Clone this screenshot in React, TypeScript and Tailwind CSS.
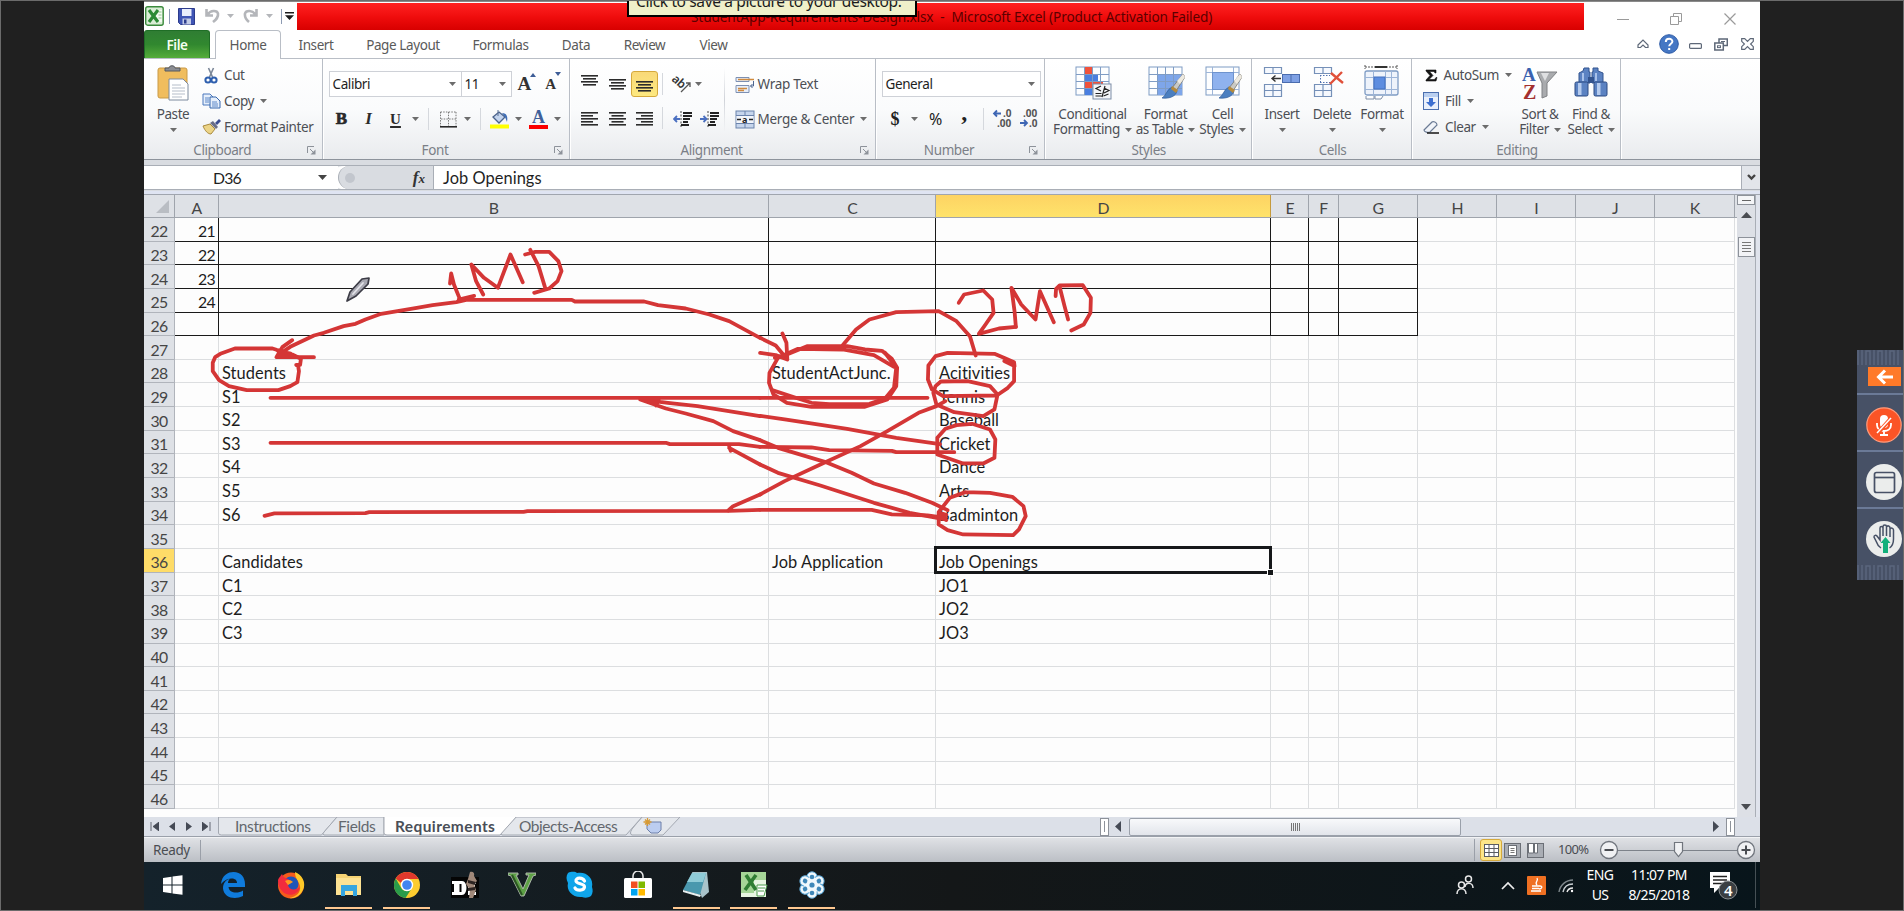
import React from "react";

const ROWS = Array.from({ length: 25 }, (_, i) => i + 22);

const COLS = [
  { id: "A", w: "w-[44px]" },
  { id: "B", w: "w-[550px]" },
  { id: "C", w: "w-[167px]" },
  { id: "D", w: "w-[335px]" },
  { id: "E", w: "w-[38px]" },
  { id: "F", w: "w-[29.5px]" },
  { id: "G", w: "w-[79.5px]" },
  { id: "H", w: "w-[79px]" },
  { id: "I", w: "w-[79px]" },
  { id: "J", w: "w-[79px]" },
  { id: "K", w: "w-[80px]" },
];

const CELLS: Record<string, string> = {
  A22: "21", A23: "22", A24: "23", A25: "24",
  B28: "Students", C28: "StudentActJunc.", D28: "Acitivities",
  B29: "S1", D29: "Tennis",
  B30: "S2", D30: "Baseball",
  B31: "S3", D31: "Cricket",
  B32: "S4", D32: "Dance",
  B33: "S5", D33: "Arts",
  B34: "S6", D34: "Badminton",
  B36: "Candidates", C36: "Job Application", D36: "Job Openings",
  B37: "C1", D37: "JO1",
  B38: "C2", D38: "JO2",
  B39: "C3", D39: "JO3",
};

function Arrow({ className = "" }: { className?: string }) {
  return (
    <svg width="7" height="4" viewBox="0 0 7 4" className={"shrink-0 " + className}>
      <path d="M0 0h7L3.5 4z" fill="#6c6c6c" />
    </svg>
  );
}

function Launcher() {
  return (
    <svg width="9" height="9" viewBox="0 0 9 9" className="absolute bottom-[4px] right-[6px]">
      <path d="M.5 7V.5H7" fill="none" stroke="#8d929a" />
      <path d="M3 3l4 4" stroke="#8d929a" />
      <path d="M8.500 3.500v5h-5z" fill="#8d929a" />
    </svg>
  );
}

function Group({ title, w, launcher, children }: { title: string; w: string; launcher?: boolean; children: React.ReactNode }) {
  return (
    <div className={"relative flex h-full shrink-0 flex-col border-r border-[#b9bec6] shadow-[1px_0_0_#fff] " + w}>
      <div className="flex h-[83px] w-full">{children}</div>
      <div className="flex h-[18px] items-center justify-center text-[#7b7f87]">
        <span className={launcher ? "-ml-[21px]" : "ml-[2px]"}>{title}</span>
      </div>
      {launcher && <Launcher />}
    </div>
  );
}

function VSep() {
  return <div className="h-[22px] w-px bg-[#d5d8dd]" />;
}

function Combo({ w, text }: { w: string; text: string }) {
  return (
    <div className={"flex h-[26px] items-center justify-between border border-[#ced1d7] bg-white pr-[5px] pl-[3px] text-[#1e1e1e] " + w}>
      <span>{text}</span>
      <Arrow />
    </div>
  );
}

function Lines({ ws, align, gap }: { ws: number[]; align: "l" | "c" | "r"; gap: number }) {
  return (
    <svg width="17" height="16" viewBox="0 0 17 16">
      {ws.map((w, i) => (
        <rect key={i} x={align === "l" ? 0 : align === "r" ? 17 - w : (17 - w) / 2} y={1 + i * gap} width={w} height="1.6" fill="#2c2c2c" />
      ))}
    </svg>
  );
}

function Brush() {
  return (
    <g>
      <path d="M36 9l2 3-9 14-4-3z" fill="#c9c9c4" stroke="#77756c" strokeWidth=".8" />
      <path d="M36 9l2 3-5 7-3-3z" fill="#eeeae0" />
      <path d="M25 22l5 4c-1 5-7 8-15 7 4-2 5-9 10-11z" fill="#4b7fc0" stroke="#2f5c99" strokeWidth=".7" />
      <path d="M25 21l6 4-2 3-5-4z" fill="#b58a3c" />
    </g>
  );
}

function TableIcon({ kind }: { kind: "cond" | "table" | "cell" }) {
  return (
    <svg width="38" height="36" viewBox="0 0 38 36">
      <rect x="2" y="2" width="33" height="28" fill="#fdfeff" stroke="#7f9cc4" />
      {kind === "cond" && (
        <g>
          <rect x="10" y="2" width="8" height="7" fill="#f0523c" />
          <rect x="10" y="9" width="14" height="7" fill="#4a7fe0" />
          <rect x="10" y="16" width="19" height="7" fill="#f0523c" />
          <rect x="10" y="23" width="9" height="7" fill="#4a7fe0" />
        </g>
      )}
      {kind === "table" && <rect x="11" y="9" width="24" height="21" fill="#7ea6ea" />}
      {kind !== "cell" && <path d="M10.500 2v28M18.500 2v28M26.500 2v28M2 9.500h33M2 16.500h33M2 23.500h33" stroke="#7f9cc4" fill="none" />}
      {kind === "cell" && (
        <g>
          <path d="M8.500 2v28M29.500 2v28M2 7.500h33M2 24.500h33" stroke="#9db5d8" fill="none" />
          <rect x="8.500" y="7.500" width="21" height="17" fill="#8fb2ee" stroke="#6e93cd" />
        </g>
      )}
      {kind === "cond" ? (
        <g>
          <rect x="19" y="19" width="18" height="15" fill="#f4f6f9" stroke="#7c8da6" />
          <path d="M27 21l-5 2.500 5 2.500M21.500 28.500h6M21.500 31h6M30 28l5-2.500-5-2.500M29.500 31l5-2M31 21l-3 11" stroke="#222" strokeWidth="1.200" fill="none" />
        </g>
      ) : (
        <Brush />
      )}
    </svg>
  );
}

function BigButton({ w, icon, l1, l2 }: { w: string; icon: React.ReactNode; l1: string; l2?: string }) {
  return (
    <div className={"flex shrink-0 flex-col items-center pt-[6px] " + w}>
      <div className="flex h-[42px] items-start justify-center">{icon}</div>
      <div className="flex h-[15px] items-center whitespace-nowrap">{l1}</div>
      <div className="flex h-[15px] items-center gap-[5px] whitespace-nowrap">
        {l2}
        <Arrow />
      </div>
    </div>
  );
}

function SmallButton({ icon, label, arrow }: { icon: React.ReactNode; label: string; arrow?: boolean }) {
  return (
    <div className="flex h-[26px] items-center">
      <div className="flex w-[22px] items-center justify-start">{icon}</div>
      <span className="whitespace-nowrap">{label}</span>
      {arrow && <Arrow className="ml-[6px]" />}
    </div>
  );
}

function TitleBar() {
  return (
    <div className="flex h-[28px] w-full bg-white">
      <div className="flex w-[153px] items-center pl-[1px]">
        <svg width="19" height="20" viewBox="0 0 19 20">
          <rect x=".7" y=".7" width="17.500" height="18.500" rx="2" fill="#d9edd5" stroke="#3a8a3c" strokeWidth="1.400" />
          <path d="M11 4h6v12h-6z" fill="#f4faf2" />
          <path d="M4 4l9 12M13 4L4 16" stroke="#2c8a35" strokeWidth="3.200" />
          <path d="M13.500 6h3M13.500 9h3M13.500 12h3" stroke="#8fc48c" />
        </svg>
        <div className="ml-[5px] h-[15px] w-px bg-[#8d9bb3]" />
        <svg width="17" height="17" viewBox="0 0 17 17" className="ml-[8px]">
          <path d="M.5 .5h16v16h-14l-2-2z" fill="#3f55b5" stroke="#2c3b8c" />
          <rect x="4" y="1" width="9.500" height="7" fill="#e9eefc" />
          <rect x="4.500" y="10.500" width="8.500" height="6" fill="#c3cbe6" />
          <rect x="6" y="11.500" width="2.500" height="4" fill="#2c3b8c" />
        </svg>
        <svg width="15" height="16" viewBox="0 0 15 16" className="ml-[10px]">
          <path d="M1.500 1v6.500H8M2.500 6.500c3-4.500 9.500-4.500 10.500-1 .6 4-2 6-5 8.500" fill="none" stroke="#b4b6ba" strokeWidth="2.600" />
        </svg>
        <svg width="7" height="4" viewBox="0 0 7 4" className="ml-[7px]"><path d="M0 0h7L3.500 4z" fill="#b4b6ba" /></svg>
        <svg width="15" height="16" viewBox="0 0 15 16" className="ml-[9px]">
          <path d="M13.500 1v6.500H7M12.500 6.500C9.500 2 3 2 2 5.500c-.6 4 1 6 4 8.500" fill="none" stroke="#b4b6ba" strokeWidth="2.600" />
        </svg>
        <svg width="7" height="4" viewBox="0 0 7 4" className="ml-[8px]"><path d="M0 0h7L3.500 4z" fill="#b4b6ba" /></svg>
        <div className="ml-[8px] h-[15px] w-px bg-[#8d9bb3]" />
        <svg width="9" height="8" viewBox="0 0 9 8" className="ml-[3px]">
          <path d="M0 0h9v1.600H0zM0 3.200h9L4.500 8z" fill="#1c1c1c" />
        </svg>
      </div>
      <div className="flex h-[27px] w-[1287px] items-center justify-start self-end bg-linear-to-b from-[#ff2020] via-[#f00d0d] to-[#d80000] pt-[2px] pl-[394px] text-[13.6px] tracking-[-0.11px] whitespace-pre text-[#5c0000]">
        StudentApp-Requirements-Design.xlsx  -  Microsoft Excel (Product Activation Failed)
      </div>
      <div className="flex flex-1 items-center pt-[5px] pl-[33px]">
        <svg width="12" height="12" viewBox="0 0 12 12"><path d="M0 6.500h12" stroke="#9a9a9a" /></svg>
        <svg width="12" height="12" viewBox="0 0 12 12" className="ml-[41px]">
          <path d="M.5 3.500h8v8h-8zM3.500 3V.5h8v8H9" fill="none" stroke="#9a9a9a" />
        </svg>
        <svg width="12" height="12" viewBox="0 0 12 12" className="ml-[42px]"><path d="M.5 .5l11 11M11.500 .5l-11 11" stroke="#9a9a9a" strokeWidth="1.200" /></svg>
      </div>
    </div>
  );
}

function TabRow() {
  return (
    <div className="flex h-[29px] w-full items-end border-b border-[#b9bec6] bg-white pt-px text-[#5a5a5a]">
      <div className="flex h-[28px] w-[66px] items-center justify-center rounded-t-[3px] border border-b-0 border-[#1f6e26] bg-linear-to-b from-[#2f7d33] via-[#31882f] to-[#55ad3a] pt-px font-semibold text-[#f4fff0]">File</div>
      <div className="-mb-px ml-[5px] flex h-[29px] w-[66px] items-center justify-center rounded-t-[4px] border border-b-0 border-[#b9bec6] bg-white pt-px">Home</div>
      <div className="flex h-[28px] w-[70px] items-center justify-center pt-[3px]">Insert</div>
      <div className="flex h-[28px] w-[104px] items-center justify-center pt-[3px] whitespace-nowrap">Page Layout</div>
      <div className="flex h-[28px] w-[91px] items-center justify-center pt-[3px]">Formulas</div>
      <div className="flex h-[28px] w-[60px] items-center justify-center pt-[3px]">Data</div>
      <div className="flex h-[28px] w-[77px] items-center justify-center pt-[3px]">Review</div>
      <div className="flex h-[28px] w-[61px] items-center justify-center pt-[3px]">View</div>
      <div className="ml-auto flex h-[28px] items-center pr-[6px]">
        <svg width="12" height="10" viewBox="0 0 12 10"><path d="M1 6l5-5 5 5v2.500H8.500L6 6 3.500 8.500H1z" fill="none" stroke="#5e6878" strokeWidth="1.200" /></svg>
        <svg width="20" height="20" viewBox="0 0 20 20" className="ml-[10px]">
          <circle cx="10" cy="10" r="9.300" fill="#4577c4" stroke="#2d5ba6" />
          <path d="M6.800 8c0-4.300 6.600-4 6.600-.6 0 2.300-3.200 2.300-3.200 4.900M10.200 14v2" fill="none" stroke="#fff" strokeWidth="2" />
        </svg>
        <svg width="13" height="6" viewBox="0 0 13 6" className="ml-[10px] mt-[3px]"><rect x=".6" y=".6" width="11.800" height="4.800" rx="1" fill="#fff" stroke="#5e6878" strokeWidth="1.200" /></svg>
        <svg width="14" height="13" viewBox="0 0 14 13" className="ml-[12px]">
          <path d="M5 5V1h8.300v6.500H9.500" fill="none" stroke="#5e6878" strokeWidth="1.500" />
          <path d="M7 3.500h4" stroke="#5e6878" />
          <rect x=".8" y="5" width="8.500" height="7" fill="#fff" stroke="#5e6878" strokeWidth="1.500" />
          <rect x="3.500" y="7.800" width="3" height="1.800" fill="none" stroke="#5e6878" />
        </svg>
        <svg width="13" height="12" viewBox="0 0 13 12" className="ml-[13px]">
          <path d="M.7.7h3l2.800 2.800L9.300.7h3v2.600L9.600 6l2.700 2.700v2.600h-3L6.500 8.500l-2.800 2.800h-3V8.700L3.400 6 .7 3.300z" fill="#fff" stroke="#5e6878" strokeWidth="1.200" />
        </svg>
      </div>
    </div>
  );
}

function CellsIcon({ kind }: { kind: "insert" | "delete" | "format" }) {
  if (kind === "format")
    return (
      <svg width="38" height="36" viewBox="0 0 38 36">
        <path d="M2 2h32M2 0v4M34 0v4" stroke="#555" strokeDasharray="2 1" fill="none" />
        <path d="M12 2h12" stroke="#333" strokeWidth="2" />
        <rect x="2" y="6" width="33" height="24" rx="2" fill="#eef3fb" stroke="#7f9cc4" strokeWidth="1.300" />
        <path d="M10.500 6v24M22.500 6v24M28.500 6v24M2 12.500h33M2 24.500h33" stroke="#9db5d8" />
        <rect x="11" y="12" width="11" height="12" fill="#5d8de0" stroke="#4370bf" />
        <path d="M3 31v3h8v-3M12 31v3h6l2-3" stroke="#7c8da6" fill="#fff" />
      </svg>
    );
  return (
    <svg width="38" height="36" viewBox="0 0 38 36">
      <path d="M1.500 2.500h17v6h-17zM10 2.500v6M1.500 19.500h17v12h-17zM10 19.500v12M1.500 25.500h17" fill="#f6f9fe" stroke="#7590b8" strokeWidth="1.200" />
      {kind === "insert" ? (
        <g>
          <path d="M18 13.500H9m3.500-3L9 13.500l3.500 3" stroke="#333" strokeWidth="1.400" fill="none" />
          <rect x="19.500" y="9.500" width="17" height="8" fill="#7ea0e4" stroke="#4a6cae" />
          <path d="M28 9.500v8" stroke="#4a6cae" />
        </g>
      ) : (
        <g>
          <path d="M7 10.500h10M7 17.500h10M7.500 10v8" stroke="#5172b0" strokeDasharray="1.500 1.500" />
          <path d="M18 8l12 10M29 7L17 19" stroke="#e0503a" strokeWidth="2.400" />
        </g>
      )}
    </svg>
  );
}

function Ribbon() {
  return (
    <div className="flex h-[101px] w-full border-b border-[#8d939c] bg-linear-to-b from-white via-[#fafbfc] to-[#e9ebee] text-[#4c4f55]">
      <Group title="Clipboard" w="w-[178.500px]" launcher>
        <BigButton
          w="w-[58px]"
          l1="Paste"
          icon={
            <svg width="33" height="37" viewBox="0 0 33 37">
              <rect x="1" y="3" width="29" height="30" rx="2" fill="#f0bd5e" stroke="#c99a46" />
              <path d="M8 6V3h4c0-3 6-3 6 0h5v3z" fill="#8b8d92" stroke="#55585e" />
              <path d="M12 14h14l5 5v16H12z" fill="#fff" stroke="#7d8a9d" />
              <path d="M15 20h9M15 23h13M15 26h13M15 29h13M15 32h10" stroke="#b5bdc9" />
            </svg>
          }
        />
        <div className="flex flex-col pt-[3px]">
          <SmallButton
            label="Cut"
            icon={
              <svg width="14" height="17" viewBox="0 0 14 17" className="ml-[2px]">
                <path d="M4.500 1l4 9M9.500 1l-4 9" stroke="#7b8798" strokeWidth="1.600" />
                <circle cx="4" cy="13" r="2.600" fill="none" stroke="#2e5fae" strokeWidth="2" />
                <circle cx="10" cy="13" r="2.600" fill="none" stroke="#2e5fae" strokeWidth="2" />
              </svg>
            }
          />
          <SmallButton
            label="Copy"
            arrow
            icon={
              <svg width="19" height="16" viewBox="0 0 19 16">
                <path d="M1 1h7l3 3v8H1z" fill="#e6effb" stroke="#4a78bd" />
                <path d="M8 4h6l4 4v7H8z" fill="#e6effb" stroke="#3566ad" />
                <path d="M3 5h4M3 7h4M3 9h4M10 9h5M10 11h6M10 13h6" stroke="#5c88c8" />
              </svg>
            }
          />
          <SmallButton
            label="Format Painter"
            icon={
              <svg width="20" height="16" viewBox="0 0 20 16">
                <path d="M1 7l7-2 5 5-4 5c-3 0-6-3-8-8z" fill="#ecd487" stroke="#a98a3d" />
                <path d="M8 4l6 6 2-2-5-6z" fill="#6a6e86" />
                <path d="M13 4l4-4 2 2-4 4z" fill="#3c4d8f" />
              </svg>
            }
          />
        </div>
      </Group>

      <Group title="Font" w="w-[247px]" launcher>
        <div className="flex w-full flex-col pt-[12px]">
          <div className="flex items-center pl-[6px]">
            <Combo w="w-[133px]" text="Calibri" />
            <div className="-ml-px"><Combo w="w-[51px]" text="11" /></div>
            <div className="ml-[6px] flex items-start font-[Liberation_Serif] text-[19px] leading-[22px] font-bold tracking-normal text-[#333]">
              A<svg width="6" height="4" viewBox="0 0 6 4" className="-ml-px"><path d="M0 4l3-4 3 4z" fill="#3c5c96" /></svg>
            </div>
            <div className="ml-[9px] flex items-start font-[Liberation_Serif] text-[15px] leading-[24px] font-bold tracking-normal text-[#333]">
              A<svg width="6" height="4" viewBox="0 0 6 4" className="-ml-px"><path d="M0 0l3 4 3-4z" fill="#3c5c96" /></svg>
            </div>
          </div>
          <div className="mt-[10px] flex h-[24px] items-center pl-[5.500px] font-[Liberation_Serif] text-[17px] tracking-normal text-[#2b2b2b]">
            <div className="flex w-[27px] justify-center font-bold [-webkit-text-stroke:0.6px_#222]">B</div>
            <div className="flex w-[27px] justify-center font-bold italic">I</div>
            <div className="flex w-[27px] justify-center text-[15px] font-bold underline decoration-[1.500px] underline-offset-2">U</div>
            <div className="flex w-[12px] justify-center"><Arrow /></div>
            <div className="flex w-[14px] justify-center"><VSep /></div>
            <div className="flex w-[26px] justify-center">
              <svg width="17" height="17" viewBox="0 0 17 17">
                <path d="M.5 1h16M.5 1v14M16 1v14M8.500 1v14M1 8h15" stroke="#777" strokeDasharray="1.500 1.200" fill="none" />
                <path d="M0 15.800h17" stroke="#2a2a2a" strokeWidth="1.600" />
              </svg>
            </div>
            <div className="flex w-[12px] justify-center"><Arrow /></div>
            <div className="flex w-[14px] justify-center"><VSep /></div>
            <div className="flex w-[25px] justify-center">
              <svg width="19" height="20" viewBox="0 0 19 20">
                <path d="M3 8l6-5 6 5-6 6z" fill="#c3d4ee" stroke="#4a628a" strokeWidth="1.300" />
                <path d="M8 1v6" stroke="#596f93" />
                <path d="M12 4c5 0 6 4 5 9l-2-5z" fill="#3f6db5" />
                <rect y="15.500" width="19" height="4" fill="#ffff00" />
              </svg>
            </div>
            <div className="flex w-[12px] justify-center"><Arrow /></div>
            <div className="flex w-[29px] justify-center">
              <div className="flex w-[19px] flex-col items-center text-[18px] leading-[16px] font-bold text-[#3e5f99]">
                A<div className="h-[4px] w-full bg-[#fb0000]" />
              </div>
            </div>
            <div className="flex w-[8px] justify-center"><Arrow /></div>
          </div>
        </div>
      </Group>

      <Group title="Alignment" w="w-[306px]" launcher>
        <div className="flex w-[88px] flex-col pt-[12px] pl-[6px]">
          <div className="flex h-[26px] items-center">
            <div className="flex w-[28px] justify-center pb-[5px]"><Lines ws={[17, 13, 17, 13]} align="c" gap={3} /></div>
            <div className="flex w-[27px] justify-center pt-[4px]"><Lines ws={[17, 13, 17, 13]} align="c" gap={3} /></div>
            <div className="flex h-[26px] w-[27px] items-end justify-center rounded-[3px] border border-[#d5a93c] bg-linear-to-b from-[#f9d978] to-[#fde980]"><Lines ws={[17, 13, 17, 13]} align="c" gap={3} /></div>
          </div>
          <div className="mt-[9px] flex h-[26px] items-center">
            <div className="flex w-[28px] justify-center"><Lines ws={[17, 12, 17, 12, 17]} align="l" gap={3} /></div>
            <div className="flex w-[27px] justify-center"><Lines ws={[17, 12, 17, 12, 17]} align="c" gap={3} /></div>
            <div className="flex w-[27px] justify-center"><Lines ws={[17, 12, 17, 12, 17]} align="r" gap={3} /></div>
          </div>
        </div>
        <div className="flex w-[10px] flex-col items-center gap-[12px] pt-[14px]"><VSep /><VSep /></div>
        <div className="flex w-[56px] flex-col pt-[12px]">
          <div className="flex h-[26px] items-center pl-[5px]">
            <svg width="19" height="20" viewBox="0 0 19 20" className="overflow-visible">
              <text x="-2" y="12" fontSize="12" fontFamily="Noto Sans" fontWeight="600" fill="#333" transform="rotate(42 6 9)">ab</text>
              <path d="M8 18l9-9m0 4V9h-4" stroke="#555" fill="none" strokeWidth="1.300" />
            </svg>
            <Arrow className="ml-[3px]" />
          </div>
          <div className="mt-[9px] flex h-[26px] items-center gap-[8px] pl-[5px]">
            {[0, 1].map((k) => (
              <svg key={k} width="19" height="16" viewBox="0 0 19 16">
                <path d="M8 0v16" stroke="#444" strokeDasharray="2 1.500" />
                <path d="M10 2h9M10 5h9M10 8h7M10 11h5M8 14h8" stroke="#222" strokeWidth="2" />
                <path d={k ? "M0 8h6M3.500 5l3 3-3 3" : "M1 8h6M4 5L1 8l3 3"} stroke="#4a6fc0" strokeWidth="1.800" fill="none" />
              </svg>
            ))}
          </div>
        </div>
        <div className="mt-[9px] h-[64px] w-px bg-linear-to-b from-transparent via-[#d0d3d9] to-transparent" />
        <div className="flex flex-col pt-[12px] pl-[10px]">
          <div className="flex h-[26px] items-center">
            <svg width="20" height="19" viewBox="0 0 20 19">
              <path d="M1 2.500h13v4H1zM1 10.500h13v7H1z" fill="#e8eef8" stroke="#7c90b3" />
              <path d="M3 4.500h16M3 13.500h9M3 15.500h6" stroke="#d08a3e" strokeWidth="1.300" />
              <path d="M18.500 6v5h-3m2-2l-2 2 2 2" stroke="#4d6690" fill="none" />
            </svg>
            <span className="ml-[3px] tracking-[-0.28px] whitespace-nowrap">Wrap Text</span>
          </div>
          <div className="mt-[9px] flex h-[26px] items-center">
            <svg width="20" height="19" viewBox="0 0 20 19">
              <rect x="1" y="1" width="18" height="17" fill="#c6d5ec" stroke="#6b83ac" />
              <path d="M1 5.500h18M1 13.500h18M10 1v4M10 14v4" stroke="#6b83ac" />
              <rect x="1.500" y="6" width="17" height="7" fill="#f3f6fb" />
              <text x="7" y="12.500" fontSize="9" fontWeight="700" fontFamily="Noto Sans" fill="#222">a</text>
              <path d="M2 9.500h4M14 9.500h4" stroke="#222" strokeWidth="1.500" />
            </svg>
            <span className="ml-[3px] tracking-[-0.28px] whitespace-nowrap">Merge &amp; Center</span>
            <Arrow className="ml-[6px]" />
          </div>
        </div>
      </Group>

      <Group title="Number" w="w-[169px]" launcher>
        <div className="flex w-full flex-col pt-[12px] pl-[6px]">
          <Combo w="w-[159px]" text="General" />
          <div className="mt-[9px] flex h-[26px] items-center">
            <div className="flex w-[27px] justify-center font-[Liberation_Serif] text-[18px] font-bold tracking-normal text-[#222]">$</div>
            <div className="flex w-[12px] justify-center"><Arrow /></div>
            <div className="flex w-[30px] justify-center text-[16px] text-[#222]">%</div>
            <div className="-mt-[14px] flex w-[27px] justify-center font-[Liberation_Serif] text-[24px] leading-[20px] font-bold text-[#222]">,</div>
            <div className="flex w-[12px] justify-center"><VSep /></div>
            {[0, 1].map((k) => (
              <div key={k} className="flex h-[18px] w-[26px] items-center justify-center">
                <svg width="20" height="20" viewBox="0 0 20 20" className="shrink-0 overflow-visible" fontFamily="Noto Sans" fontSize="10" fontWeight="700" fill="#555" letterSpacing="0">
                  <text x={k ? 4 : 10} y="8">{k ? ".00" : ".0"}</text>
                  <text x={k ? 10 : 4} y="18">{k ? ".0" : ".00"}</text>
                  <path d={k ? "M1 14h7M5 11l3 3-3 3" : "M1 4.500h7M4 1.500l-3 3 3 3"} stroke="#3e66b4" strokeWidth="1.800" fill="none" />
                </svg>
              </div>
            ))}
          </div>
        </div>
      </Group>

      <Group title="Styles" w="w-[207.500px]">
        <BigButton w="ml-[7px] w-[82px]" l1="Conditional" l2="Formatting" icon={<TableIcon kind="cond" />} />
        <BigButton w="ml-[2px] w-[60px]" l1="Format" l2="as Table" icon={<TableIcon kind="table" />} />
        <BigButton w="w-[54px]" l1="Cell" l2="Styles" icon={<TableIcon kind="cell" />} />
      </Group>

      <Group title="Cells" w="w-[160px]">
        <BigButton w="ml-[5px] w-[50px]" l1="Insert" icon={<CellsIcon kind="insert" />} />
        <BigButton w="w-[50px]" l1="Delete" icon={<CellsIcon kind="delete" />} />
        <BigButton w="w-[50px]" l1="Format" icon={<CellsIcon kind="format" />} />
      </Group>

      <Group title="Editing" w="w-[209px]">
        <div className="flex w-[100px] flex-col pt-[3px] pl-[11px]">
          <SmallButton label="AutoSum" arrow icon={<svg width="13" height="13" viewBox="0 0 13 13" className="ml-[2px]"><path d="M1 1h10v3h-1L9 2.500H4.500L8 6.500l-4 4h5.500L11 8.500h1L11 12H1v-1l4-4.500L1 2z" fill="#151515" stroke="#151515" strokeWidth=".6" /></svg>} />
          <SmallButton
            label="Fill"
            arrow
            icon={
              <svg width="16" height="18" viewBox="0 0 16 18">
                <rect x=".5" y=".5" width="15" height="17" fill="#e9f0fb" stroke="#4b6fae" />
                <rect x="1" y="1" width="14" height="4" fill="#b9cff0" />
                <path d="M6 6h4v4h3l-5 5-5-5h3z" fill="#3c6fd0" />
              </svg>
            }
          />
          <SmallButton
            label="Clear"
            arrow
            icon={
              <svg width="17" height="15" viewBox="0 0 17 15">
                <path d="M1 10l8-8c1-1 5 0 5 3l-7 7c-2 1-6 0-6-2z" fill="#f1f4f9" stroke="#6b7b95" strokeWidth="1.200" />
                <path d="M4 13h12" stroke="#222" strokeWidth="1.600" />
              </svg>
            }
          />
        </div>
        <BigButton
          w="w-[56px]"
          l1="Sort &"
          l2="Filter"
          icon={
            <svg width="36" height="36" viewBox="0 0 36 36" className="overflow-visible">
              <path d="M15 7h20L25 18v13l-5 2V18z" fill="#a9abae" stroke="#808285" />
              <path d="M19 8h8l-4 8z" fill="#dedfe1" />
              <text x="0" y="16" fontSize="19" fontWeight="700" fontFamily="Liberation Serif" fill="#3a62b0">A</text>
              <text x="1" y="34" fontSize="20" fontWeight="700" fontFamily="Liberation Serif" fill="#a3302f">Z</text>
            </svg>
          }
        />
        <BigButton
          w="w-[46px]"
          l1="Find &"
          l2="Select"
          icon={
            <svg width="34" height="34" viewBox="0 0 34 34">
              <path d="M10 3h5v4h1v11H5V8l4-2zM19 3h5v3l5 2v10H18V7h1z" fill="#5b82c2" stroke="#33548f" />
              <rect x="1" y="17" width="13" height="14" rx="1.500" fill="#5b82c2" stroke="#2c4a82" />
              <rect x="20" y="17" width="13" height="14" rx="1.500" fill="#5b82c2" stroke="#2c4a82" />
              <rect x="4" y="18" width="3.500" height="12" fill="#b5cbee" />
              <rect x="23" y="18" width="3.500" height="12" fill="#b5cbee" />
              <rect x="14" y="12" width="6" height="6" fill="#33548f" />
              <path d="M9 8v8M22 8v8" stroke="#a9c2ea" strokeWidth="2" />
            </svg>
          }
        />
      </Group>
    </div>
  );
}

function FormulaBar() {
  return (
    <div className="flex h-[35px] w-full flex-col bg-[#d9dce1] pt-[5px]">
      <div className="flex h-[25px] w-full border-y border-[#a9aeb6] bg-[#dde0e5] font-[Lato] text-[16.400px] tracking-normal text-[#1f1f1f]">
        <div className="flex w-[194px] items-center bg-white">
          <div className="w-[166px] pt-px text-center text-[15.800px] tracking-[-0.800px]">D36</div>
          <svg width="9" height="5" viewBox="0 0 9 5" className="ml-[8px]"><path d="M0 0h9L4.500 5z" fill="#444" /></svg>
        </div>
        <div className="flex w-[95px] items-center rounded-l-[12px] border-l border-[#a9aeb6] bg-[#d9dce1] pl-[6px] shadow-[-6px_0_0_#fff]">
          <div className="size-[10px] rounded-full bg-[#c2c6cd]" />
          <span className="ml-auto pr-[8px] font-[Liberation_Serif] text-[17px] font-bold text-[#333] italic">f<span className="text-[13px]">x</span></span>
        </div>
        <div className="flex flex-1 items-center border-l border-[#a9aeb6] bg-white pt-px pl-[9px] tracking-[0.05px]">Job Openings</div>
        <div className="flex w-[19px] items-center justify-center border-l border-[#a9aeb6] bg-[#e2e5ea]">
          <svg width="9" height="7" viewBox="0 0 9 7"><path d="M1 1l3.500 3.500L8 1" fill="none" stroke="#444" strokeWidth="2.400" /></svg>
        </div>
      </div>
      <div className="mt-px h-[4px] border-b border-[#a0a5ae] bg-[#dfe4f2]" />
    </div>
  );
}

function cellBorder(col: string, row: number) {
  const dark = row <= 26 && col <= "G";
  return dark ? "border-r border-b border-r-[#1a1a1a] border-b-[#1a1a1a]" : "border-r border-b border-r-[#dcdee0] border-b-[#dcdee0]";
}

function Grid() {
  return (
    <div className="flex h-[622px] w-full">
      <div className="flex w-[1593px] flex-col overflow-hidden bg-[#fdfdfd] font-[Lato] text-[16.400px] tracking-[0.08px]">
        <div className="flex h-[23px] shrink-0 border-b border-[#9fa4ac] bg-[#dee1e6] text-[15.800px] text-[#454545]">
          <div className="flex w-[31px] shrink-0 items-end justify-end border-r border-[#9fa4ac] pr-[5px] pb-[4px]">
            <svg width="13" height="13" viewBox="0 0 13 13"><path d="M13 0v13H0z" fill="#b9bdc3" /></svg>
          </div>
          {COLS.map((c) => (
            <div
              key={c.id}
              className={
                "flex shrink-0 items-center justify-center border-r pt-[3px] pl-px " +
                c.w +
                (c.id === "D" ? " border-[#c59a3c] bg-linear-to-b from-[#fdd363] to-[#fee36b]" : " border-[#9fa4ac]")
              }
            >
              {c.id}
            </div>
          ))}
        </div>
        {ROWS.map((r) => (
          <div key={r} className="flex h-[23.650px] shrink-0">
            <div
              className={
                "flex w-[31px] shrink-0 items-center justify-center border-r border-b border-[#b0b4bb] pt-[4px] text-[15.800px] tracking-[-0.700px] text-[#454545] " +
                (r === 36 ? "bg-[#fedc68]" : "bg-[#dee1e6]")
              }
            >
              {r}
            </div>
            {COLS.map((c) => (
              <div
                key={c.id}
                className={
                  "relative flex shrink-0 items-center whitespace-nowrap pt-[4px] text-[#1c1c1c] " +
                  c.w + " " + cellBorder(c.id, r) +
                  (c.id === "A" ? " justify-end pr-[3px] text-[15.800px] tracking-[-0.700px]" : " pl-[3px]")
                }
              >
                {CELLS[c.id + r]}
                {c.id === "D" && r === 36 && (
                  <div className="absolute -inset-x-[2px] -top-[3px] -bottom-[2px] z-10 border-[3px] border-[#16181a]">
                    <div className="absolute -right-[5px] -bottom-[5px] size-[7px] border border-white bg-[#16181a]" />
                  </div>
                )}
              </div>
            ))}
          </div>
        ))}
      </div>
      <div className="flex w-[18px] flex-col items-center bg-[#dde0e6]">
        <div className="flex h-[10px] w-full items-center justify-center border border-[#8d929a] bg-[#f4f5f7]"><div className="h-px w-[9px] bg-[#666]" /></div>
        <svg width="11" height="6" viewBox="0 0 11 6" className="mt-[7px]"><path d="M0 6h11L5.500 0z" fill="#4a4d52" /></svg>
        <div className="mt-[19px] flex h-[20px] w-[17px] flex-col items-center justify-center gap-[2px] border border-[#8d929a] bg-[#f2f3f6]">
          <div className="h-px w-[9px] bg-[#777]" /><div className="h-px w-[9px] bg-[#777]" /><div className="h-px w-[9px] bg-[#777]" /><div className="h-px w-[9px] bg-[#777]" />
        </div>
        <svg width="10" height="6" viewBox="0 0 10 6" className="mt-auto mb-[7px]"><path d="M0 0h10L5 6z" fill="#4a4d52" /></svg>
      </div>
      <div className="flex-1 border-l border-[#a9aeb6] bg-[#dfe3ec]" />
    </div>
  );
}

function SheetTabs() {
  return (
    <div className="flex h-[20px] w-full items-center border-b border-[#9aa0aa] bg-[#dce0e8] font-[Lato] text-[15.500px] tracking-[-0.4px] text-[#63676e]">
      <div className="flex w-[74px] items-center justify-between pr-[7px] pl-[6px]">
        <svg width="9" height="9" viewBox="0 0 9 9"><path d="M1 0v9M9 0v9L3 4.500z" fill="#454a55" stroke="#454a55" strokeWidth=".8" /></svg>
        <svg width="6" height="9" viewBox="0 0 6 9"><path d="M6 0v9L0 4.500z" fill="#454a55" /></svg>
        <svg width="6" height="9" viewBox="0 0 6 9"><path d="M0 0v9l6-4.500z" fill="#454a55" /></svg>
        <svg width="9" height="9" viewBox="0 0 9 9"><path d="M8 0v9M0 0v9l6-4.500z" fill="#454a55" stroke="#454a55" strokeWidth=".8" /></svg>
      </div>
      <div className="relative flex h-[19px] w-[480px] items-center">
        <svg width="480" height="19" viewBox="0 0 480 19" className="absolute inset-0">
          <path d="M.5 0v16q0 2 3 2h100L119 0z" fill="#e4e7ec" stroke="#a3a8b1" />
          <path d="M119 0h47v18h-60q-2-1 0-3z" fill="#e4e7ec" stroke="#a3a8b1" />
          <path d="M424 0h38l-17 18h-31q-3-1 0-6z" fill="#e4e7ec" stroke="#a3a8b1" />
          <path d="M298 0h126l-16 18H284q-2-1 0-3z" fill="#e4e7ec" stroke="#a3a8b1" />
          <path d="M166 -1v17q0 2 3 2h113L299 -1z" fill="#fff" stroke="#a3a8b1" />
          <g transform="translate(21 -1)">
            <path d="M408 6h14v8l-3 3h-7l-4-4z" fill="#bccdf0" stroke="#6d7fa8" />
            <path d="M408.500 2v8M404.500 6h8M406 3.500l5 5M411 3.500l-5 5" stroke="#d79a33" strokeWidth="1.300" />
          </g>
        </svg>
        <span className="relative ml-[17px] w-[103px]">Instructions</span>
        <span className="relative w-[57px]">Fields</span>
        <span className="relative w-[124px] font-bold tracking-[0.400px] text-[#4a4f58]">Requirements</span>
        <span className="relative tracking-[-0.460px] whitespace-nowrap">Objects-Access</span>
      </div>
      <div className="ml-[402px] flex h-[18px] w-[9px] items-center justify-center border border-[#8d929a] bg-white"><div className="h-[11px] w-px bg-[#8d929a]" /></div>
      <svg width="6" height="11" viewBox="0 0 6 11" className="ml-[6px]"><path d="M6 0v11L0 5.500z" fill="#454a55" /></svg>
      <div className="ml-[8px] flex h-[18px] w-[332px] items-center justify-center gap-[1px] rounded-[2px] border border-[#9aa0aa] bg-linear-to-b from-[#f8f9fb] to-[#e2e5eb]">
        <div className="h-[8px] w-px bg-[#777]" /><div className="h-[8px] w-px bg-[#777]" /><div className="h-[8px] w-px bg-[#777]" /><div className="h-[8px] w-px bg-[#777]" /><div className="h-[8px] w-px bg-[#777]" />
      </div>
      <svg width="6" height="11" viewBox="0 0 6 11" className="ml-auto"><path d="M0 0v11l6-5.500z" fill="#454a55" /></svg>
      <div className="mr-[25px] ml-[7px] flex h-[18px] w-[9px] items-center justify-center border border-[#8d929a] bg-white"><div className="h-[11px] w-px bg-[#8d929a]" /></div>
    </div>
  );
}

function StatusBar() {
  return (
    <div className="flex h-[25px] w-full items-center border-t border-[#f2f3f5] bg-linear-to-b from-[#dfe1e5] to-[#bbbfc5] text-[#4a4d52]">
      <div className="w-[57px] border-r border-[#9a9fa8] pl-[9px]">Ready</div>
      <div className="ml-auto flex w-[286px] items-center border-l border-[#9a9fa8] pl-[5px]">
        <div className="flex h-[22px] w-[22px] items-center justify-center rounded-[3px] border border-[#d5a93c] bg-[#fce588]">
          <svg width="15" height="13" viewBox="0 0 15 13"><rect x=".5" y=".5" width="14" height="12" fill="#fff" stroke="#5a5d63" /><path d="M5 0v13M10 0v13M0 4.500h15M0 8.500h15" stroke="#5a5d63" /></svg>
        </div>
        <svg width="17" height="15" viewBox="0 0 17 15" className="ml-[2px]"><rect x=".5" y=".5" width="16" height="14" fill="#a9adb4" stroke="#6b6f76" /><rect x="4.500" y="2.500" width="8" height="10" fill="#fff" stroke="#6b6f76" /><path d="M6.500 5.500h4M6.500 7.500h4M6.500 9.500h4" stroke="#777" /></svg>
        <svg width="17" height="15" viewBox="0 0 17 15" className="ml-[6px]"><rect x=".5" y=".5" width="16" height="14" fill="#a9adb4" stroke="#6b6f76" /><path d="M1.500 1v9h5V1M7.500 1v9h3V1" fill="#fff" stroke="#6b6f76" /></svg>
        <span className="ml-[14px] w-[33px] text-[13px] tracking-[-0.700px]">100%</span>
        <svg width="160" height="20" viewBox="0 0 160 20" className="ml-[7px] shrink-0">
          <path d="M19 10.500h121" stroke="#7d828a" />
          <circle cx="11" cy="10" r="8.500" fill="#f0f1f3" stroke="#70757d" strokeWidth="1.300" />
          <path d="M6.500 10h9" stroke="#4a4d52" strokeWidth="2" />
          <path d="M76.500 2.500h8v9l-4 5-4-5z" fill="#f0f1f3" stroke="#70757d" strokeWidth="1.200" />
          <circle cx="148" cy="10" r="8.500" fill="#f0f1f3" stroke="#70757d" strokeWidth="1.300" />
          <path d="M143.500 10h9M148 5.500v9" stroke="#4a4d52" strokeWidth="2" />
        </svg>
      </div>
    </div>
  );
}

function TaskSlot({ active, children }: { active?: boolean; children: React.ReactNode }) {
  return (
    <div className="flex h-full w-[57.900px] flex-col items-center">
      <div className="flex h-[45px] items-center justify-center">
        <svg width="28" height="28" viewBox="0 0 28 28">{children}</svg>
      </div>
      <div className={"h-[2px] w-[47px] " + (active ? "bg-[#ffc890]" : "")} />
    </div>
  );
}

function Taskbar() {
  const petals = [0, 60, 120, 180, 240, 300];
  return (
    <div className="flex h-[48px] w-full bg-linear-to-r from-[#14222b] via-[#141718] to-[#08151b] text-white">
      <div className="flex h-full w-[60px] items-start">
        <div className="flex h-[45px] w-[57px] items-center justify-center">
          <svg width="20" height="20" viewBox="0 0 20 20"><path d="M0 3l8.500-1.200v7.700H0zM9.500 1.600L19.500.2v9.300h-10zM0 10.500h8.500v7.700L0 17zM9.500 10.500h10v9.300l-10-1.400z" fill="#fff" /></svg>
        </div>
      </div>
      <TaskSlot>
        <path d="M2 13C3 4 9 1 14.500 1 22 1 26 6.500 26 13v3H9.500c.5 6 9 7 14.500 3.500V25C16 29 5 27 4 17.500 4 12 7 9 11 7.500 9.500 9 9 11 9 12h9c0-6-10-6-16 1z" fill="#0f7bdc" />
      </TaskSlot>
      <TaskSlot>
        <circle cx="14" cy="14.500" r="13" fill="#f55b1b" />
        <path d="M18 1c7 3 10 9 9 15-2 8-9 12-15 11 8-1 12-6 11-12-1-5-5-7-5-14z" fill="#ffc928" />
        <circle cx="14" cy="13" r="7.500" fill="#2155b8" />
        <path d="M1 9c1-3 3-4 4-6 1 3 3 4 6 5l3 2-3 4c1 5 7 6 12 2-2 9-13 10-18 4-3-3-4-7-4-11z" fill="#f22c3d" />
        <path d="M8 10c3-2 6-1 8 1l-5 3z" fill="#ff9a1f" />
      </TaskSlot>
      <TaskSlot active>
        <path d="M1 3h10l2 2h13v19H1z" fill="#f6d374" />
        <path d="M1 7h25v17H1z" fill="#fde293" />
        <path d="M6 14h16v11h-4v-5h-8v5H6z" fill="#35a5e0" />
      </TaskSlot>
      <TaskSlot active>
        <circle cx="14" cy="14" r="13" fill="#fccc2f" />
        <path d="M2.700 7.500A13 13 0 0 1 25.500 8H14a6.500 6.500 0 0 0-6 4z" fill="#e0382c" />
        <path d="M2.700 7.500A13 13 0 0 0 12.500 27l5.500-8.500a6.500 6.500 0 0 1-9.500-1z" fill="#2a9c4a" />
        <circle cx="14" cy="14" r="6.200" fill="#fff" />
        <circle cx="14" cy="14" r="4.800" fill="#4285f0" />
      </TaskSlot>
      <TaskSlot>
        <rect x="0" y="6" width="28" height="21" fill="#050505" />
        <path d="M1 10h10c6 0 6 14 0 14H1v-3h2v-8H1zM8.500 13v8h2v-8z" fill="#fff" />
        <path d="M17 10h8v3h-1v8h1v3h-8z" fill="#fff" />
        <path d="M19 1c3-1 5 1 4 4l3 5-3 3 2 6-3 8h-4l1-8-4-6 2-5z" fill="#a08879" />
        <path d="M17 9l8 2-1 3-7-2zM17 17l7-1v3l-7 1z" fill="#2d2422" />
      </TaskSlot>
      <TaskSlot>
        <path d="M0 2h10v2H8l7 14 6-14h-3V2h10v2l-3 1-9 20h-3L3 5 0 4z" fill="#5da045" stroke="#b9c0b6" strokeWidth=".9" />
        <path d="M4 4l10 20" stroke="#2b5522" strokeWidth="2" />
      </TaskSlot>
      <TaskSlot>
        <path d="M2 2c4-2 8-1 9 0 9-2 17 5 15 14 1 3 1 6-1 9-3 2-6 2-9 1C7 27 0 20 2 12 0 8 0 5 2 2z" fill="#10a5ea" />
        <path d="M18.500 10c-2-4-9-3.500-8.500 0s9 2 8.500 6-8 4-9.500 1" fill="none" stroke="#fff" strokeWidth="3.200" strokeLinecap="round" />
      </TaskSlot>
      <TaskSlot>
        <path d="M9 8V5a5 5 0 0 1 10 0v3" fill="none" stroke="#e8e8e8" strokeWidth="1.500" />
        <rect x="0" y="7" width="28" height="20" rx="1.500" fill="#fff" />
        <rect x="7" y="10.500" width="6.500" height="6.500" fill="#f25022" /><rect x="14.500" y="10.500" width="6.500" height="6.500" fill="#7fba00" />
        <rect x="7" y="18" width="6.500" height="6.500" fill="#00a4ef" /><rect x="14.500" y="18" width="6.500" height="6.500" fill="#ffb900" />
      </TaskSlot>
      <TaskSlot active>
        <path d="M10 1h15l2 20-7 6z" fill="#a9c3ca" />
        <path d="M10 2h14l-6 22L1 19z" fill="#4a98ae" />
        <path d="M10 2h14l-3 9L5 11z" fill="#8fcbd7" />
        <path d="M1 19l18 5-1 2L1 21z" fill="#e8eff0" />
      </TaskSlot>
      <TaskSlot active>
        <rect x="1" y="1" width="25" height="25" fill="#e8f5e2" />
        <path d="M1 1h25v8H14v13H1z" fill="#a5d597" />
        <path d="M6 4l10 15M16 4L5 19" stroke="#2f7d33" strokeWidth="3.600" />
        <path d="M17 14h10l-3 11h-7zM18 17h7M18 20h6" fill="#fff" stroke="#4c9a4c" />
      </TaskSlot>
      <TaskSlot active>
        {petals.map((a) => (
          <g key={a} transform={"rotate(" + a + " 14 14)"}>
            <circle cx="14" cy="6" r="5.200" fill="#f1f8fc" stroke="#5ba6d6" strokeWidth="1" />
          </g>
        ))}
        <circle cx="14" cy="14" r="8" fill="#f1f8fc" />
        {petals.map((a) => (
          <g key={a} transform={"rotate(" + a + " 14 14)"}>
            <circle cx="14" cy="6" r="2.300" fill="#3f87b8" />
          </g>
        ))}
        <circle cx="14" cy="14" r="2.600" fill="#3f87b8" />
      </TaskSlot>
      <div className="ml-auto flex h-full items-start pr-[4px] text-[14px] tracking-[-0.600px]">
        <div className="flex h-[46px] items-center">
          <svg width="18" height="20" viewBox="0 0 18 20" fill="none" stroke="#e8e8e8" strokeWidth="1.500">
            <circle cx="12.500" cy="4" r="3" /><path d="M9 12c0-5 8-5 8 1" />
            <circle cx="5.500" cy="10" r="3" /><path d="M1 19c0-7 9-7 9 0" />
          </svg>
          <svg width="14" height="9" viewBox="0 0 14 9" className="ml-[27px]"><path d="M1 8l6-6 6 6" fill="none" stroke="#eee" strokeWidth="1.700" /></svg>
          <svg width="19" height="19" viewBox="0 0 19 19" className="ml-[12px]">
            <rect width="19" height="19" rx="1" fill="#ef7022" />
            <path d="M10 2c2 3-3 4 0 7M5 10h8M5 12.500h7M4 15h10M13 10c3 0 2 3-1 3" fill="none" stroke="#fff" strokeWidth="1.300" />
          </svg>
          <svg width="17" height="15" viewBox="0 0 17 15" className="ml-[12px]" fill="none" strokeWidth="1.400">
            <path d="M1 14C2 7 8 2 15 2" stroke="#7e878b" /><path d="M5 14c1-5 5-8 10-8" stroke="#c9cfd2" /><path d="M9 14c1-3 3-4 6-4" stroke="#eee" /><circle cx="14" cy="13" r="1.200" fill="#fff" stroke="none" />
          </svg>
          <div className="ml-[9px] flex w-[32px] flex-col items-center leading-[20px]"><span>ENG</span><span>US</span></div>
          <div className="ml-[9px] flex w-[68px] flex-col items-center leading-[20px] whitespace-nowrap"><span>11:07 PM</span><span>8/25/2018</span></div>
          <svg width="32" height="30" viewBox="0 0 32 30" className="ml-[16px]">
            <path d="M1 2h20v16H10l-5 5v-5H1z" fill="#fff" />
            <path d="M4 6.500h14M4 10h14M4 13.500h11" stroke="#222" strokeWidth="1.500" />
            <circle cx="19" cy="20" r="9" fill="#3a3f42" stroke="#8a8f92" />
            <text x="15" y="25.500" fontSize="15" fontFamily="Noto Sans" fontWeight="600" fill="#fff">4</text>
          </svg>
          <div className="ml-[14px] h-[46px] w-px bg-[#465055]" />
        </div>
      </div>
    </div>
  );
}

const INK_LEFT = [
  "M405 466L395 466L400 470L402 485L398 518L380 530L350 542L270 542L225 530L200 512L184 485L184 460L190 443L205 432L240 417L335 417L345 421L385 435L407 448L405 466",
  "M360 428L380 412L440 378L465 370L515 350L545 343L570 330L610 313L700 295L740 287L800 278L825 271L1092 271L1100 276L1275 276L1310 287L1380 297L1440 315L1490 335L1568 385",
  "M385 392L360 413L345 443L440 443M350 432L380 432M352 424L390 440",
  "M784 222L787 192L794 225L808 266M806 270L845 259",
  "M868 255L850 215L838 165L870 205L905 235L937 135L968 218",
  "M974 135L1000 127L1035 127L1058 155L1066 185L1056 215L1035 237L997 250M987 121L1008 170L1024 232",
  "M330 565L1568 565",
  "M1265 570L1335 580L1410 590L1568 620M1265 570L1330 597L1380 612L1450 635L1500 665L1568 692M1275 568L1312 571L1305 588",
  "M330 700L1330 700L1340 704L1515 704L1568 712",
  "M1490 711L1494 724M1490 715L1568 765",
  "M315 919L340 912L570 911L580 908L970 907L980 905L1490 904L1568 901",
  "M1488 903L1500 890L1568 855",
];

const INK_RIGHT = [
  "M45 385L80 408L106 450M95 372L104 400L106 450M45 430L80 437L106 450",
  "M78 445L105 435L150 410L240 410L280 420L318 424L340 448L352 475L350 530L330 570L280 592L160 592L105 580L75 555L65 520L66 490L85 445L130 418L230 420L300 437L345 472",
  "M72 542L130 567L160 580L200 584L290 583L325 567L345 535L350 475L325 430",
  "M230 407L260 360L290 330L350 308L445 305L485 335L515 380L528 438",
  "M490 280L502 255L545 243L565 270L568 310L550 345L535 373L580 357L618 352",
  "M618 352L615 305L608 235L630 285L662 330L672 245L703 338",
  "M707 260L708 238L716 228L768 227L786 265L785 310L770 345L742 363M716 232L727 290L735 330",
  "M592 455L615 470L614 458L595 447L570 433L465 430L438 440L422 468L421 510L430 540L455 560L575 558L600 535L614 515L614 472",
  "M450 516L510 515L560 530L577 555L570 600L545 620L480 608L440 585L433 550L438 530L450 516",
  "M485 647L460 658L442 685L442 735L500 762L545 762L570 745L572 690L560 660L520 643L485 647",
  "M505 848L560 850L610 862L635 890L640 920L625 960L612 977L500 975L465 962L445 945L445 908L470 865L505 848",
  "M45 565L420 565",
  "M45 619L100 630L240 658L350 685L448 704",
  "M45 692L85 715L190 757L250 790L300 822L370 850L430 880L465 902",
  "M45 712L160 714L200 722L340 724L350 728L480 728",
  "M45 765L85 790L180 828L300 880L380 910L460 930M447 910L462 916L450 924L462 932",
  "M45 901L295 901L340 915L420 918L460 925",
  "M45 855L100 815L180 765L270 710L330 665L400 610L440 590L460 575",
];

function Ink() {
  return (
    <svg width="1904" height="911" viewBox="0 0 1904 911" className="pointer-events-none absolute inset-0" fill="none" stroke="#d43636" strokeWidth="3.800" strokeLinejoin="round" strokeLinecap="round">
      <g transform="translate(140 209.500) scale(.3954 .3333)">
        {INK_LEFT.map((d) => <path key={d} d={d} vectorEffect="non-scaling-stroke" />)}
      </g>
      <g transform="translate(740 209.500) scale(.4464 .3333)">
        {INK_RIGHT.map((d) => <path key={d} d={d} vectorEffect="non-scaling-stroke" />)}
      </g>
      <g stroke="#3c3c46" strokeWidth="1.700">
        <path d="M347 301l3-9 12-13 7-1-1 6-12 12z" fill="#a9a9b2" />
        <path d="M353 294l10-11" stroke="#e2e2e8" strokeWidth="1.800" />
      </g>
    </svg>
  );
}

function Ribs() {
  return (
    <svg width="44" height="15" viewBox="0 0 44 15" className="shrink-0" stroke="#5b667d" fill="none" strokeWidth="1.500">
      <path d="M1 0v15M5 0v15M9 15V1h4v14M17 0v15M21 15V1h4v14M29 0v15M33 15V1h4v14M41 0v15" />
    </svg>
  );
}

function SidePanel() {
  return (
    <div className="ml-auto mt-[349px] flex h-[230px] w-[46px] flex-col overflow-hidden bg-[#475166]">
      <div className="flex h-[45px] flex-col border-b-2 border-[#6b7a97]">
        <Ribs />
        <div className="mt-[2px] ml-[11px] flex h-[19px] w-[33px] items-center justify-center bg-[#ff7a29]">
          <svg width="18" height="16" viewBox="0 0 18 16"><path d="M17 8H3M9 1.500L2.500 8 9 14.500" stroke="#fff" strokeWidth="3" fill="none" /></svg>
        </div>
      </div>
      <div className="flex h-[57px] items-center border-b-2 border-[#6b7a97] pt-[5px] pl-[9px]">
        <svg width="36" height="36" viewBox="0 0 36 36">
          <circle cx="18" cy="18" r="17.200" fill="#fb5426" stroke="#ff9a7a" strokeWidth="1.200" />
          <rect x="14" y="8" width="8" height="13" rx="4" fill="#fff" />
          <path d="M11 16v2c0 8 14 8 14 0v-2M18 24v4M14 28h8" stroke="#fff" strokeWidth="1.800" fill="none" />
          <path d="M11 27L26 10" stroke="#fb5426" strokeWidth="4" /><path d="M11 26L25 11" stroke="#fff" strokeWidth="1.500" />
        </svg>
      </div>
      <div className="flex h-[57px] items-center border-b-2 border-[#6b7a97] pt-[5px] pl-[9px]">
        <svg width="36" height="36" viewBox="0 0 36 36">
          <circle cx="18" cy="18" r="18" fill="#ebedec" />
          <rect x="8.500" y="8.500" width="20" height="20" rx="2" fill="none" stroke="#475166" strokeWidth="1.700" />
          <path d="M8.500 13.500h20" stroke="#475166" strokeWidth="1.700" />
        </svg>
      </div>
      <div className="flex h-[55px] items-center pt-[5px] pl-[9px]">
        <svg width="36" height="36" viewBox="0 0 36 36">
          <circle cx="18" cy="18" r="18" fill="#ebedec" />
          <path d="M15 27c-3-2-4-4-5-7l-2-4c0-2 2-2 3-1l3 4V7c0-2 3-2 3 0v8V5.500c0-2 3.500-2 3.500 0V15M20.500 6c1-2 3.500-1 3.500 1v9M24 8c1-1.500 3.500-1 3.500 1v9c0 5-1 7-4 9" fill="none" stroke="#475166" strokeWidth="1.500" />
          <path d="M19.500 16l5 6h-2.500v10h-5V22h-2.500z" fill="#12b07c" />
        </svg>
      </div>
      <div className="mt-auto"><Ribs /></div>
    </div>
  );
}

export default function App() {
  return (
    <div className="relative flex h-[911px] w-[1904px] overflow-hidden border border-[#6b6b6b] bg-[#202020] font-['Noto_Sans',sans-serif] text-[13.500px] tracking-[-0.4px]">
      <div className="w-[143px] shrink-0" />
      <div className="flex w-[1616px] shrink-0 flex-col border-t border-[#8a8a8a] bg-white">
        <TitleBar />
        <TabRow />
        <Ribbon />
        <FormulaBar />
        <Grid />
        <SheetTabs />
        <StatusBar />
        <Taskbar />
      </div>
      <SidePanel />
      <div className="absolute top-[-1px] left-[626px] h-[17px] w-[290px] border-2 border-t-0 border-black bg-[#f0f0ca]">
        <div className="-mt-[10px] pl-[7px] text-[15.500px] tracking-[-0.36px] whitespace-nowrap text-[#1c1c1c]">Click to save a picture to your desktop.</div>
      </div>
      <div className="absolute -top-px -left-px"><div className="relative h-[911px] w-[1904px]"><Ink /></div></div>
    </div>
  );
}
